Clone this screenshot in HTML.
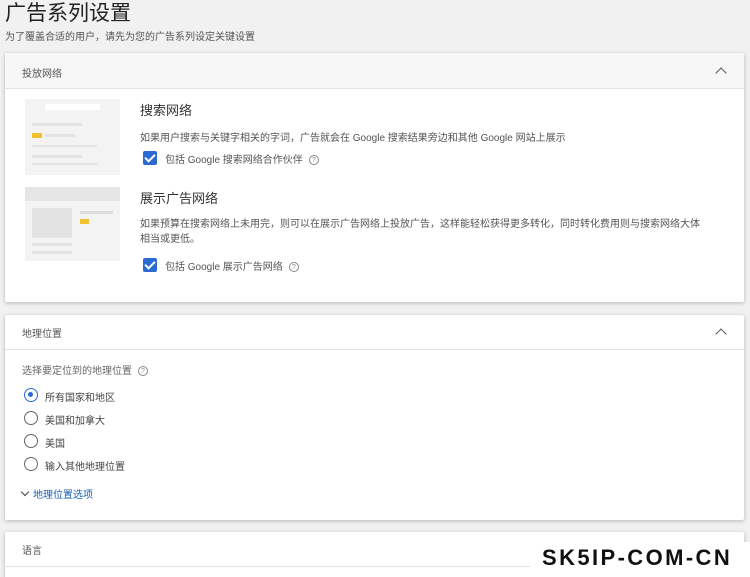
<!DOCTYPE html>
<html style="overflow:hidden;height:577px"><head><meta charset="utf-8"><style>
*{margin:0;padding:0;box-sizing:border-box}
body{width:750px;height:577px;overflow:hidden;background:#f1f1f1;font-family:"Liberation Sans","Noto Sans CJK SC",sans-serif;color:#333;position:relative}
.a{position:absolute;white-space:nowrap}
.card{position:absolute;left:5px;width:739px;background:#fff;box-shadow:0 1px 4px rgba(0,0,0,.25);border-radius:2px}
.hd{position:absolute;left:0;right:0;top:0;border-bottom:1px solid #e2e2e2}
.chev{position:absolute;right:19px;width:8px;height:8px;border-left:1.5px solid #555;border-top:1.5px solid #555;transform:rotate(45deg)}
.cb{position:absolute;width:14px;height:14px;background:#2a6ad2;border-radius:2px}
.cb:after{content:"";position:absolute;left:4px;top:1px;width:4px;height:8px;border-right:2px solid #fff;border-bottom:2px solid #fff;transform:rotate(45deg)}
.q{display:inline-block;width:10px;height:10px;border:1px solid #888;border-radius:50%;font-size:7px;line-height:9px;text-align:center;color:#888;vertical-align:1px;margin-left:6px}
.r{position:absolute;left:24px;width:14px;height:14px;border:1.5px solid #666;border-radius:50%}
.g{position:absolute;background:#e3e3e3}
</style></head><body>
<div class="a" style="left:5px;top:0;font-size:21px;color:#222;line-height:28px">广告系列设置</div>
<div class="a" style="left:5px;top:28px;font-size:10px;color:#555">为了覆盖合适的用户，请先为您的广告系列设定关键设置</div>

<div class="card" style="top:53px;height:249px">
 <div class="hd" style="height:36px;background:#f7f7f7"></div>
 <div class="a" style="left:17px;top:12px;font-size:10px;color:#555">投放网络</div>
 <div class="chev" style="top:16px"></div>
 <div class="g" style="left:20px;top:46px;width:95px;height:76px;background:#f3f3f3"></div>
 <div class="g" style="left:40px;top:51px;width:55px;height:6px;background:#fff"></div>
 <div class="g" style="left:27px;top:70px;width:50px;height:3px"></div>
 <div class="g" style="left:27px;top:80px;width:10px;height:5px;background:#f2c12e"></div>
 <div class="g" style="left:40px;top:81px;width:30px;height:3px"></div>
 <div class="g" style="left:27px;top:92px;width:65px;height:2px"></div>
 <div class="g" style="left:27px;top:102px;width:50px;height:3px"></div>
 <div class="g" style="left:27px;top:110px;width:65px;height:2px"></div>
 <div class="g" style="left:20px;top:134px;width:95px;height:74px;background:#f3f3f3"></div>
 <div class="g" style="left:20px;top:134px;width:95px;height:14px;background:#e6e6e6"></div>
 <div class="g" style="left:27px;top:155px;width:40px;height:30px"></div>
 <div class="g" style="left:75px;top:158px;width:33px;height:3px;background:#ddd"></div>
 <div class="g" style="left:75px;top:166px;width:9px;height:5px;background:#f2c12e"></div>
 <div class="g" style="left:27px;top:190px;width:40px;height:3px"></div>
 <div class="g" style="left:27px;top:198px;width:40px;height:3px"></div>
 <div class="a" style="left:135px;top:47px;font-size:13px;color:#333">搜索网络</div>
 <div class="a" style="left:135px;top:76px;font-size:10px;color:#555">如果用户搜索与关键字相关的字词，广告就会在 Google 搜索结果旁边和其他 Google 网站上展示</div>
 <div class="cb" style="left:138px;top:98px"></div>
 <div class="a" style="left:160px;top:98px;font-size:10px;color:#555">包括 Google 搜索网络合作伙伴<span class="q">?</span></div>
 <div class="a" style="left:135px;top:135px;font-size:13px;color:#333">展示广告网络</div>
 <div class="a" style="left:135px;top:164px;font-size:10px;color:#555;line-height:15px">如果预算在搜索网络上未用完，则可以在展示广告网络上投放广告，这样能轻松获得更多转化，同时转化费用则与搜索网络大体<br>相当或更低。</div>
 <div class="cb" style="left:138px;top:205px"></div>
 <div class="a" style="left:160px;top:205px;font-size:10px;color:#555">包括 Google 展示广告网络<span class="q">?</span></div>
</div>

<div class="card" style="top:315px;height:205px">
 <div class="hd" style="height:35px"></div>
 <div class="a" style="left:17px;top:10px;font-size:10px;color:#555">地理位置</div>
 <div class="chev" style="top:15px"></div>
 <div class="a" style="left:17px;top:47px;font-size:10px;color:#666">选择要定位到的地理位置<span class="q">?</span></div>
</div>
<div class="r" style="left:24px;top:388px;border-color:#2a6ad2"><div style="position:absolute;left:3px;top:3px;width:5px;height:5px;border-radius:50%;background:#2a6ad2"></div></div>
<div class="a" style="left:45px;top:389px;font-size:10px;color:#444">所有国家和地区</div>
<div class="r" style="top:411px"></div><div class="a" style="left:45px;top:412px;font-size:10px;color:#444">美国和加拿大</div>
<div class="r" style="top:434px"></div><div class="a" style="left:45px;top:435px;font-size:10px;color:#444">美国</div>
<div class="r" style="top:457px"></div><div class="a" style="left:45px;top:458px;font-size:10px;color:#444">输入其他地理位置</div>
<div class="a" style="left:22px;top:486px;font-size:10px;color:#1a5fb4"><span style="display:inline-block;width:6px;height:6px;border-right:1.5px solid #444;border-bottom:1.5px solid #444;transform:rotate(45deg);margin-right:5px;vertical-align:3px"></span>地理位置选项</div>

<div class="card" style="top:532px;height:60px">
 <div class="hd" style="height:35px"></div>
 <div class="a" style="left:17px;top:10px;font-size:10px;color:#555">语言</div>
</div>
<div class="a" style="left:530px;top:542px;width:220px;height:35px;background:#fff"></div>
<div class="a" style="left:542px;top:545px;font-size:22px;font-weight:bold;color:#111;letter-spacing:2.4px">SK5IP-COM-CN</div>
</body></html>
